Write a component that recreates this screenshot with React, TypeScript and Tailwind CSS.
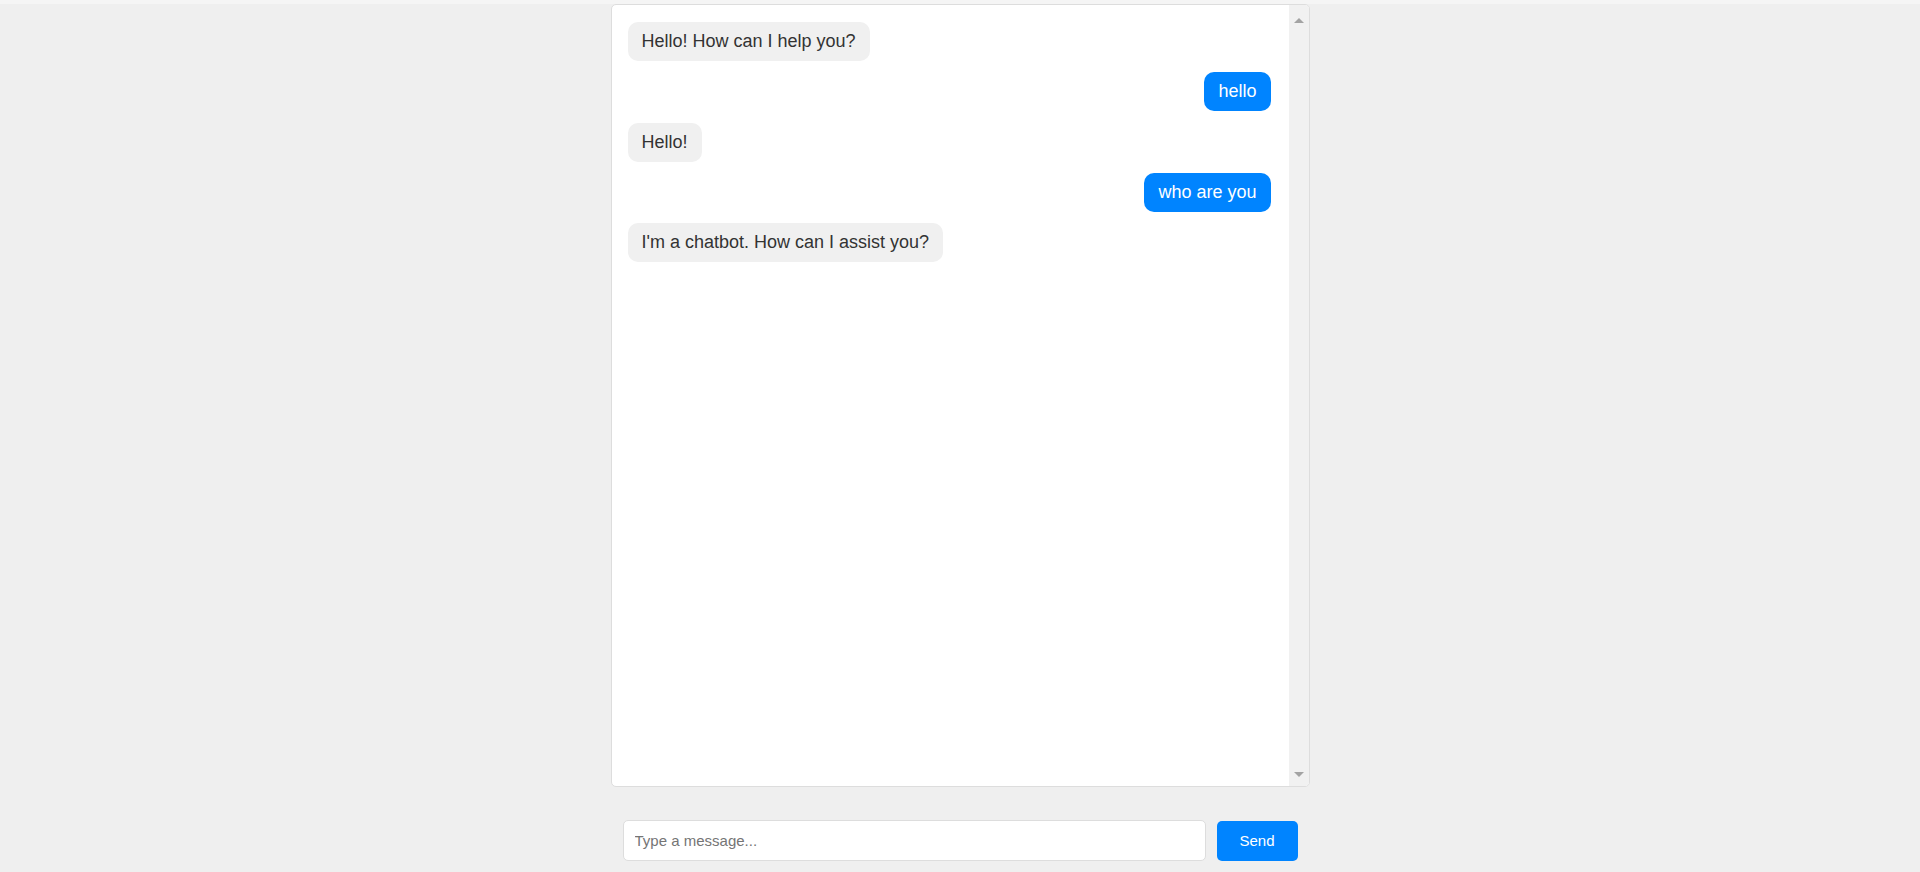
const messages = [
  { from: "bot", text: "Hello! How can I help you?" },
  { from: "user", text: "hello" },
  { from: "bot", text: "Hello!" },
  { from: "user", text: "who are you" },
  { from: "bot", text: "I'm a chatbot. How can I assist you?" },
];

function ScrollTrack() {
  return (
    <div className="w-[20px] shrink-0 bg-[#f1f1f1] flex flex-col items-center justify-between pt-[13px] pb-[9px]">
      {/* up arrow */}
      <div className="w-0 h-0 border-l-[5px] border-r-[5px] border-b-[5px] border-l-transparent border-r-transparent border-b-[#a3a3a3]" />
      {/* down arrow */}
      <div className="w-0 h-0 border-l-[5px] border-r-[5px] border-t-[5px] border-l-transparent border-r-transparent border-t-[#a3a3a3]" />
    </div>
  );
}

export default function App() {
  return (
    <div className="min-h-screen bg-[#efefef] flex flex-col items-center font-['Liberation_Sans',Arial,sans-serif]">
      <div className="h-[4px] w-full bg-[#f5f5f5]" />

      {/* Chat window */}
      <div className="w-[699px] h-[783px] bg-white border border-[#dddddd] rounded-[5px] flex overflow-hidden">
        <div className="flex-1 flex flex-col gap-[11.3px] pl-[16px] pr-[18px] pt-[17px]">
          {messages.map((m, i) => (
            <div key={i} className={m.from === "user" ? "flex justify-end" : "flex justify-start"}>
              <div
                className={
                  m.from === "user"
                    ? "bg-[#0084ff] text-white text-[18px] leading-[21px] py-[9px] px-[14px] rounded-[10px]"
                    : "bg-[#f0f0f0] text-[#333333] text-[18px] leading-[21px] py-[9px] px-[14px] rounded-[10px]"
                }
              >
                {m.text}
              </div>
            </div>
          ))}
        </div>
        <ScrollTrack />
      </div>

      {/* Input bar */}
      <div className="w-[675px] flex items-center gap-[11px] mt-[33px]">
        <input
          type="text"
          placeholder="Type a message..."
          className="flex-1 h-[41px] bg-white border border-[#dddddd] rounded-[5px] px-[11px] text-[15px] text-[#333333] placeholder:text-[#757575] outline-none"
        />
        <button className="w-[81px] h-[40px] bg-[#0084ff] text-white text-[15px] rounded-[5px] mt-[1px]">
          Send
        </button>
      </div>
    </div>
  );
}
